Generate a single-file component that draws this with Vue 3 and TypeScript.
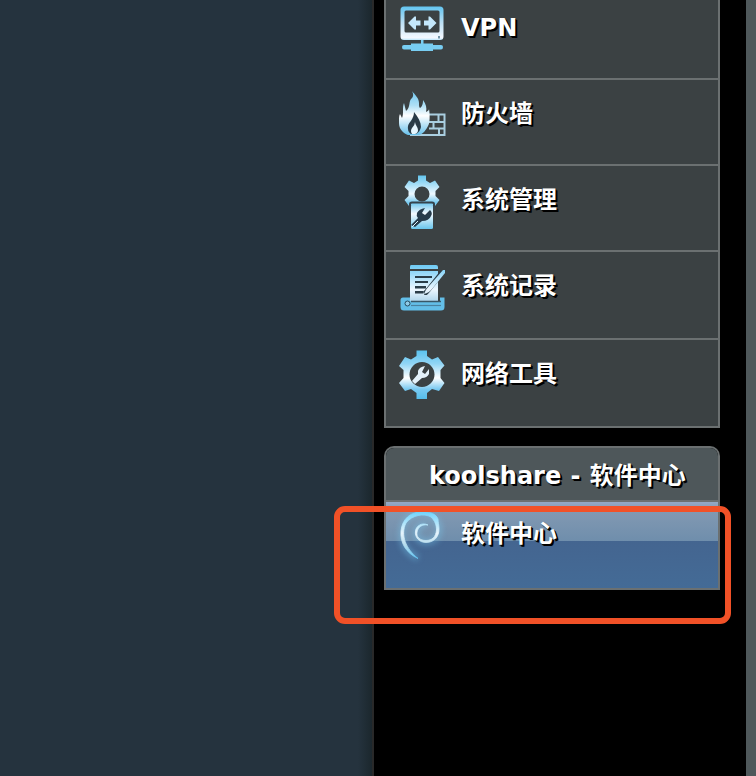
<script setup lang="ts">
interface MenuItem {
  id: string
  label: string
  height: number
}

const items: MenuItem[] = [
  { id: 'vpn', label: 'VPN', height: 80 },
  { id: 'firewall', label: '防火墙', height: 86 },
  { id: 'admin', label: '系统管理', height: 86 },
  { id: 'log', label: '系统记录', height: 88 },
  { id: 'tools', label: '网络工具', height: 88 },
]
</script>

<template>
  <div class="page">
    <div class="backdrop"></div>
    <div class="divider"></div>
    <main class="panel">
      <nav class="menu">
        <div v-for="item in items" :key="item.id" class="row" :style="{ height: item.height + 'px' }">
          <svg v-if="item.id === 'vpn'" class="icon" viewBox="0 0 48 60">
            <defs>
              <linearGradient id="gVpn" x1="0" y1="7" x2="0" y2="51" gradientUnits="userSpaceOnUse">
                <stop offset="0" stop-color="#65c5f0" /><stop offset=".35" stop-color="#bbdff4" />
                <stop offset=".7" stop-color="#f4f8ff" /><stop offset=".83" stop-color="#65c9f3" /><stop offset="1" stop-color="#78cdf2" />
              </linearGradient>
            </defs>
            <path fill="url(#gVpn)" fill-rule="evenodd" d="M6 6.500H42Q45.500 6.500 45.500 10V36.500Q45.500 40 42 40H6Q2.500 40 2.500 36.500V10Q2.500 6.500 6 6.500ZM8 10.500Q6.500 10.500 6.500 12V31Q6.500 32.500 8 32.500H40Q41.500 32.500 41.500 31V12Q41.500 10.500 40 10.500Z" />
            <path fill="#c4e7fb" d="M10 23 16.500 16.500H18V20.500H22.500V25.500H18V29.500H16.500ZM38.500 23 32 16.500H30.500V20.500H26V25.500H30.500V29.500H32Z" />
            <path fill="#78cdf2" d="M23 40H25.500V43.500H35V45H43Q45 45 45 47Q45 49.500 43 49.500H35V51H13V49.500H6Q4 49.500 4 47Q4 45 6 45H13V43.500H23Z" />
            <rect x="40" y="36" width="2" height="2.500" fill="#7394a7" />
          </svg>
          <svg v-else-if="item.id === 'firewall'" class="icon" viewBox="0 0 48 60">
            <defs>
              <linearGradient id="gFire" x1="0" y1="11" x2="0" y2="56" gradientUnits="userSpaceOnUse">
                <stop offset="0" stop-color="#70c7ef" /><stop offset=".32" stop-color="#aedff5" />
                <stop offset=".55" stop-color="#fff" /><stop offset="1" stop-color="#5fbdea" />
              </linearGradient>
            </defs>
            <path fill="none" stroke="#a9cee0" stroke-width="2" d="M31 34.500H46.500V55H12M31 42H46M31 48.500H46M40.500 34.500V42M35.500 42V48.500M41 48.500V55" />
            <path fill="url(#gFire)" d="M14 11C17 15 21 18 21 23C21 26 21 27 22 28C25 26 25 22 25 20C28 24 29 28 28 32C31 31 31 29 31 29C32 35 32 43 30 46C28 50 25 54 21 55H10C5 53 1 49 1 43C1 38 1 36 2 34L4 38C6 34 4 27 6 23L8 31C13 27 10 21 14 18C16 16 15 13 14 11Z" />
            <path fill="#293b47" d="M16 32C20 37 23 42 23 47Q22 52 18 54H13Q9 51 10 46C11 42 16 39 16 32Z" />
            <path fill="#e5f6ff" d="M17 42C17 45 20 47 20 50Q20 53 17 54H14Q12 51 14 48Q17 45 17 42Z" />
          </svg>
          <svg v-else-if="item.id === 'admin'" class="icon" viewBox="0 0 48 60">
            <defs>
              <linearGradient id="gAdmin" x1="0" y1="9" x2="0" y2="63" gradientUnits="userSpaceOnUse">
                <stop offset="0" stop-color="#5fc4ee" /><stop offset=".35" stop-color="#eef8ff" />
                <stop offset=".52" stop-color="#72c8ef" /><stop offset=".72" stop-color="#f5faff" /><stop offset="1" stop-color="#69c6ed" />
              </linearGradient>
            </defs>
            <path fill="url(#gAdmin)" fill-rule="evenodd" d="M20 9.500H28V14.500L32 17L37 14.500L41.500 21L37.500 25V30L41.500 34L37 40L31 38H17L11 40L6.500 34L10.500 30V25L6.500 21L11 14.500L16 17L20 14.500ZM24 20.500A7.500 7.500 0 1 0 24 35.500A7.500 7.500 0 1 0 24 20.500Z" />
            <rect x="13" y="38" width="22" height="25" rx="1.500" fill="url(#gAdmin)" />
            <path d="M12 43V38Q12 36.500 14 36.500H34Q36 36.500 36 38V43" fill="none" stroke="#35434d" stroke-width="2" />
            <path fill="#263b4b" d="M27 42Q21 43 19 47Q18 50 20 52L13 59L17 61L24 55Q31 55 33 50Q35 47 32 44L27 49L24 47Z" />
            <path d="M14 61 20 55" stroke="#dff4ff" stroke-width="1" />
          </svg>
          <svg v-else-if="item.id === 'log'" class="icon" viewBox="0 0 48 60">
            <defs>
              <linearGradient id="gLog" x1="0" y1="12" x2="0" y2="58" gradientUnits="userSpaceOnUse">
                <stop offset="0" stop-color="#68c8f4" /><stop offset=".55" stop-color="#edf7ff" />
                <stop offset=".78" stop-color="#b8daee" /><stop offset="1" stop-color="#52bae9" />
              </linearGradient>
            </defs>
            <path fill="url(#gLog)" d="M13 13H38Q40 13 40 15V17H12V15Q12 13 13 13ZM12 19H40V48H12Z" />
            <path fill="#2b3d48" d="M17 24H34V26H17ZM17 29H30V31H17ZM17 34H28V36.500H17ZM17 39H25V41.500H17ZM24 43.500H32V45H24Z" />
            <path d="M44.500 20 31 37Q28 41 26 42" fill="none" stroke="#2b3d48" stroke-width="5" />
            <path fill="url(#gLog)" d="M45 18H47V21L34 37Q31 41 26 42Q28 37 31 34Z" />
            <path fill="#63bee8" d="M5 45.500Q2.500 45.500 2.500 48V55Q2.500 58.500 6 58.500H43Q46.500 58.500 46.500 55V45.500H42V50H13V45.500Z" />
            <path fill="url(#gLog)" d="M12 43H40V49H12Z" />
            <path d="M13 49.500H43" stroke="#395767" stroke-width="1.500" />
            <circle cx="9.500" cy="51.500" r="2.500" fill="#8fcce9" stroke="#284b5e" />
            <path d="M13 53.500H43" stroke="#4a819f" stroke-width="1.200" />
          </svg>
          <svg v-else class="icon" viewBox="0 0 48 60">
            <defs>
              <linearGradient id="gTools" x1="0" y1="10" x2="0" y2="59" gradientUnits="userSpaceOnUse">
                <stop offset="0" stop-color="#58c2ef" /><stop offset=".28" stop-color="#91d5f5" />
                <stop offset=".57" stop-color="#fff" /><stop offset=".8" stop-color="#79c9f1" /><stop offset="1" stop-color="#55bdea" />
              </linearGradient>
            </defs>
            <path fill="url(#gTools)" fill-rule="evenodd" d="M18.500 10.500H29V16L34 19.500L40 17L46.500 25.500L42.500 30V38L46.500 43L41 51L34 49L29 53V59H18.500V53L13 49L7 51L1 43L5.500 38V30L1 26L7 17L13 19.500L18.500 16ZM24 22A12.500 12.500 0 1 0 24 47A12.500 12.500 0 1 0 24 22Z" />
            <path fill="#e4f1fa" d="M27 26Q21 27 20 31V34L14 41L17 44L24 38Q29 38 31 34V29L27 34L24 32Z" />
          </svg>
          <span class="label">{{ item.label }}</span>
        </div>
      </nav>

      <section class="center">
        <h2 class="heading">koolshare - 软件中心</h2>
        <div class="row active">
          <svg class="icon" viewBox="0 0 48 60">
            <defs>
              <linearGradient id="gSwirl" x1="0" y1="10" x2="0" y2="57" gradientUnits="userSpaceOnUse">
                <stop offset="0" stop-color="#70d3fb" /><stop offset=".45" stop-color="#e6f4fc" /><stop offset=".7" stop-color="#b5dced" /><stop offset="1" stop-color="#60c6f5" />
              </linearGradient>
              <filter id="glow" x="-40%" y="-40%" width="180%" height="180%"><feGaussianBlur stdDeviation="3" /></filter>
            </defs>
            <path d="M20 56C9 51 3 42 4 30C5 17 14 10 25 11C33 12 41 18 41 27C41 35 36 40 28 40C21 40 17 35 18 29C19 24 24 21 29 23" stroke="#79cef4" stroke-width="5" fill="none" opacity=".5" filter="url(#glow)" />
            <path fill="url(#gSwirl)" stroke="url(#gSwirl)" stroke-width=".8" stroke-linejoin="round" d="M20 56.500C8 51 2 41 3 29C4 17 13 9 25 10C33 10 38 12 40 17C40 20 41 23 41 27C41 35 36 40.500 28 40.500C21 40.500 16.500 35 17.500 29C18 24 24 20 30 23C24 22 20 25 19 30C18 35 22 38.500 28 38.500C34 38.500 38 35 38.500 28C38.500 23 37 19 33 15C26 11 14 13 8 21C2 33 8 47 20 56.500Z" />
          </svg>
          <span class="label">软件中心</span>
        </div>
      </section>
      <div class="highlight"></div>
    </main>
    <div class="edge"></div>
  </div>
</template>

<style>
body { margin: 0; overflow: hidden; background: #000; }
</style>

<style scoped>
.page {
  display: flex;
  width: 756px;
  height: 776px;
  overflow: hidden;
  background: #000;
  color: #fff;
  font-family: "DejaVu Sans", "Noto Sans CJK SC", sans-serif;
  font-size: 24px;
  font-weight: 700;
}
.backdrop { width: 372px; background: linear-gradient(90deg, #25333e 0, #25333e 358px, #1b272d 372px); }
.divider { width: 2px; background: #292929; }
.panel { position: relative; width: 372px; box-sizing: border-box; padding-left: 10px; }
.edge { width: 10px; background: #4f585b; }
.menu, .center { width: 336px; box-sizing: border-box; border: 2px solid #6b7071; }
.menu { border-top: 0; border-bottom: 0; }
.row {
  display: flex;
  align-items: flex-start;
  gap: 15px;
  box-sizing: border-box;
  padding-left: 12px;
  border-bottom: 2px solid #6b7071;
  background: #3b4143;
}
.icon { width: 48px; height: 60px; flex: none; overflow: visible; filter: blur(.45px); }
.label {
  padding-top: 16px;
  line-height: 36px;
  white-space: nowrap;
  text-shadow: 2px 2px 0 #000, 1px 1px 1px #000;
}
.row:first-child .label { padding-top: 10px; }
.center { margin-top: 18px; border-bottom: 0; border-radius: 10px 10px 0 0; overflow: hidden; }
.heading {
  height: 54px;
  box-sizing: border-box;
  margin: 0;
  padding: 10px 0 0 43px;
  border-bottom: 2px solid #6b7071;
  background: #4e575a;
  font-size: 24px;
  line-height: 36px;
  word-spacing: 1px;
  white-space: nowrap;
  text-shadow: 2px 2px 0 #000, 1px 1px 1px #000;
}
.active {
  height: 88px;
  background: linear-gradient(#94a8c4 0, #8299b2 9px, #6f8eac 39px, #446590 39px, #446b96 86px);
}
.active .label { padding-top: 14px; }
.highlight {
  position: absolute;
  left: -40px;
  top: 506px;
  width: 397px;
  height: 117.5px;
  box-sizing: border-box;
  border: 6px solid #f15127;
  border-radius: 11px;
}
</style>
